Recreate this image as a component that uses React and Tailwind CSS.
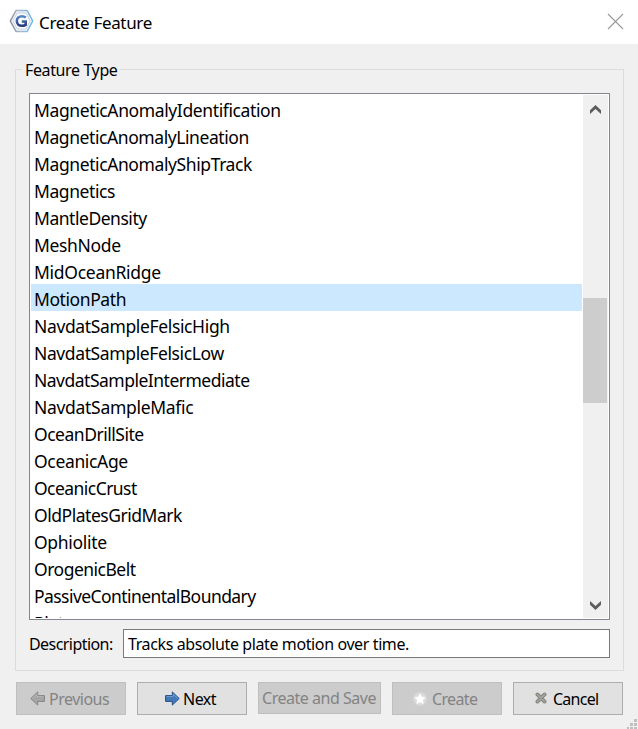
const features = [
  ["MagneticAnomalyIdentification", "tracking-[-0.38px]"],
  ["MagneticAnomalyLineation", "tracking-[-0.42px]"],
  ["MagneticAnomalyShipTrack", "tracking-[-0.4px]"],
  ["Magnetics", "tracking-[-0.42px]"],
  ["MantleDensity", "tracking-[-0.47px]"],
  ["MeshNode", "tracking-[-0.35px]"],
  ["MidOceanRidge", "tracking-[-0.28px]"],
  ["MotionPath", "tracking-[-0.42px]"],
  ["NavdatSampleFelsicHigh", "tracking-[-0.36px]"],
  ["NavdatSampleFelsicLow", "tracking-[-0.38px]"],
  ["NavdatSampleIntermediate", "tracking-[-0.5px]"],
  ["NavdatSampleMafic", "tracking-[-0.3px]"],
  ["OceanDrillSite", "tracking-[-0.48px]"],
  ["OceanicAge", "tracking-[-0.34px]"],
  ["OceanicCrust", "tracking-[-0.55px]"],
  ["OldPlatesGridMark", "tracking-[-0.47px]"],
  ["Ophiolite", "tracking-[-0.3px]"],
  ["OrogenicBelt", "tracking-[-0.5px]"],
  ["PassiveContinentalBoundary", "tracking-[-0.56px]"],
  ["Plate", "tracking-[-0.4px]"],
];

function AppLogo() {
  return (
    <svg width="25" height="24" viewBox="0 0 25 24" className="shrink-0">
      <defs>
        <linearGradient id="rim" x1="0" y1="0.5" x2="1" y2="0.4">
          <stop offset="0" stopColor="#8a8a90" />
          <stop offset="0.4" stopColor="#a9bccd" />
          <stop offset="1" stopColor="#68b4e6" />
        </linearGradient>
        <linearGradient id="gee" x1="0" y1="0" x2="0" y2="1">
          <stop offset="0" stopColor="#5588c4" />
          <stop offset="1" stopColor="#2a3a7e" />
        </linearGradient>
      </defs>
      <path d="M7 1.6H18.2L23.7 12L18.2 22.4H7L1.3 12Z" fill="#f3f6fa" stroke="url(#rim)" strokeWidth="1.5" strokeLinejoin="round" />
      <path d="M8.2 4H17L21.2 12L17 20H8.2L4 12Z" fill="#fcfdfe" stroke="#c3d3e3" strokeWidth="1" />
      <path d="M16.8 8.6C15.5 7.5 14.4 7.2 13 7.2C9.9 7.2 7.8 9.2 7.8 12C7.8 14.8 9.9 16.8 12.8 16.8C14.3 16.8 15.7 16.4 16.7 15.8V12.5H12.8" fill="none" stroke="url(#gee)" strokeWidth="2.6" />
    </svg>
  );
}

function Arrow({ left, fill, stroke, light }) {
  return (
    <svg width="15" height="15" viewBox="0 0 15 15" className={left ? "-mt-px shrink-0 -scale-x-100" : "-mt-px shrink-0"}>
      <path d="M.6 4.6H7.3V.9L14.2 7.5L7.3 14.1V10.4H.6Z" fill={fill} stroke={stroke} strokeLinejoin="round" />
      <path d="M1.6 5.6H8.2V3.2L12.7 7.4" fill="none" stroke={light} strokeWidth="0.8" />
    </svg>
  );
}

function Star() {
  return (
    <svg width="16" height="16" viewBox="0 0 16 16" className="shrink-0">
      <circle cx="8" cy="8" r="7.6" fill="#fff" opacity="0.12" />
      <circle cx="8" cy="8" r="6.2" fill="#fff" opacity="0.2" />
      <path d="M8 2.8L9.6 6L13.2 6.5L10.6 9L11.2 12.6L8 10.9L4.8 12.6L5.4 9L2.8 6.5L6.4 6Z" fill="#fff" stroke="#fff" strokeWidth="0.6" strokeLinejoin="round" />
    </svg>
  );
}

function Cross() {
  return (
    <svg width="12" height="12" viewBox="0 0 12 12" className="-mt-px shrink-0">
      <path d="M2.4 2.4L9.6 9.6M9.6 2.4L2.4 9.6" stroke="#858580" strokeWidth="3.8" strokeLinecap="round" />
      <path d="M2.4 2.4L9.6 9.6M9.6 2.4L2.4 9.6" stroke="#a6a6a0" strokeWidth="1.6" strokeLinecap="round" />
    </svg>
  );
}

function Chevron({ down }) {
  return (
    <svg width="11" height="9" viewBox="0 0 11 9" className={down ? "-scale-y-100" : ""}>
      <path d="M0 5.2L5.5 0L11 5.2V9L5.5 4L0 9Z" fill="#5d5d5d" />
    </svg>
  );
}

const tone = {
  on: "border-[#adadad] bg-[#e1e1e1] text-black",
  off: "border-[#bfbfbf] bg-[#cccccc] text-[#838383]",
};

function Button({ state, size, children }) {
  return (
    <button className={`flex shrink-0 items-center border text-[16px] leading-none whitespace-nowrap ${tone[state]} ${size}`}>
      {children}
    </button>
  );
}

export default function App() {
  return (
    <div className="relative flex h-[729px] w-[638px] flex-col overflow-hidden bg-[#f0f0f0] font-['Noto_Sans',sans-serif] text-black">
      <header className="flex h-[44px] shrink-0 items-center justify-between bg-white pr-[14px] pl-[9px]">
        <div className="flex items-center gap-[5px] pb-[2px]">
          <AppLogo />
          <h1 className="pt-[3px] text-[17px] leading-[22px] tracking-[-0.33px]">Create Feature</h1>
        </div>
        <svg width="17" height="17" viewBox="0 0 17 17" className="-mt-px">
          <path d="M1 1L16 16M16 1L1 16" stroke="#999" strokeWidth="1.1" />
        </svg>
      </header>

      <fieldset className="mr-[14px] ml-[15px] mt-[15px] flex h-[612px] shrink-0 flex-col">
        <div className="flex h-[20px] shrink-0 items-center">
          <span className="h-[10px] w-[7px] self-end border-t border-l border-[#dcdcdc]" />
          <span className="px-[3px] pt-[2px] text-[16px] leading-[20px] tracking-[-0.38px] whitespace-nowrap">Feature Type</span>
          <span className="h-[10px] flex-1 self-end border-t border-r border-[#dcdcdc]" />
        </div>
        <div className="flex h-[592px] flex-col border-x border-b border-[#dcdcdc] px-[13px] pt-[14px]">
          <div className="flex h-[527px] shrink-0 border border-[#828790] bg-white p-px">
            <ul className="h-[523px] flex-1 overflow-hidden">
              {features.map(([name, spacing], i) => (
                <li key={name} className={`h-[27px] pl-[3px] text-[17.5px] leading-[30px] whitespace-nowrap ${i === 7 ? "bg-[#cce8ff]" : ""}`}>
                  <span className={spacing}>{name}</span>
                </li>
              ))}
            </ul>
            <div className="ml-px flex h-[523px] w-[25px] flex-col items-center bg-[#f0f0f0]">
              <div className="flex h-[29px] shrink-0 items-center"><Chevron /></div>
              <div className="mt-[174px] h-[105px] w-[24px] shrink-0 self-start bg-[#cdcdcd]" />
              <div className="mt-auto flex h-[25px] shrink-0 items-center"><Chevron down /></div>
            </div>
          </div>
          <div className="mt-[9px] flex h-[29px] shrink-0 items-center">
            <label className="w-[94px] text-[16px] leading-[20px] tracking-[-0.56px] whitespace-nowrap">Description:</label>
            <div className="flex h-[29px] flex-1 items-center border border-[#7a7a7a] bg-white pl-[4px] text-[16px] leading-[20px]">
              <span className="tracking-[-0.39px]">Tracks absolute plate motion over time.</span>
            </div>
          </div>
        </div>
      </fieldset>

      <footer className="mt-[11px] flex items-start gap-[11px] pl-[16px]">
        <Button state="off" size="h-[33px] w-[110px] pl-[13px] gap-[4px]">
          <Arrow left fill="#a5a5a5" stroke="#858585" light="#bababa" />
          <span className="tracking-[-0.5px]">Previous</span>
        </Button>
        <Button state="on" size="h-[33px] w-[110px] pl-[27px] gap-[3px]">
          <Arrow fill="#4479b8" stroke="#24508b" light="#7aa3d3" />
          <span className="tracking-[-0.5px]">Next</span>
        </Button>
        <Button state="off" size="h-[32px] w-[123px] pl-[3px]">
          <span className="tracking-[-0.48px]">Create and Save</span>
        </Button>
        <Button state="off" size="h-[33px] w-[110px] pl-[19px] gap-[4px]">
          <Star />
          <span className="tracking-[-0.65px]">Create</span>
        </Button>
        <Button state="on" size="h-[33px] w-[110px] pl-[21px] gap-[6px]">
          <Cross />
          <span className="tracking-[-0.75px]">Cancel</span>
        </Button>
      </footer>

      <svg width="11" height="10" viewBox="0 0 11 10" className="absolute right-0 bottom-0" fill="#bfbfbf">
        <path d="M7 0h3v3h-3zM3 4h3v3h-3zM7 4h3v3h-3zM0 8h2v2h-2zM3 8h3v2h-3zM7 8h3v2h-3z" />
      </svg>
    </div>
  );
}
